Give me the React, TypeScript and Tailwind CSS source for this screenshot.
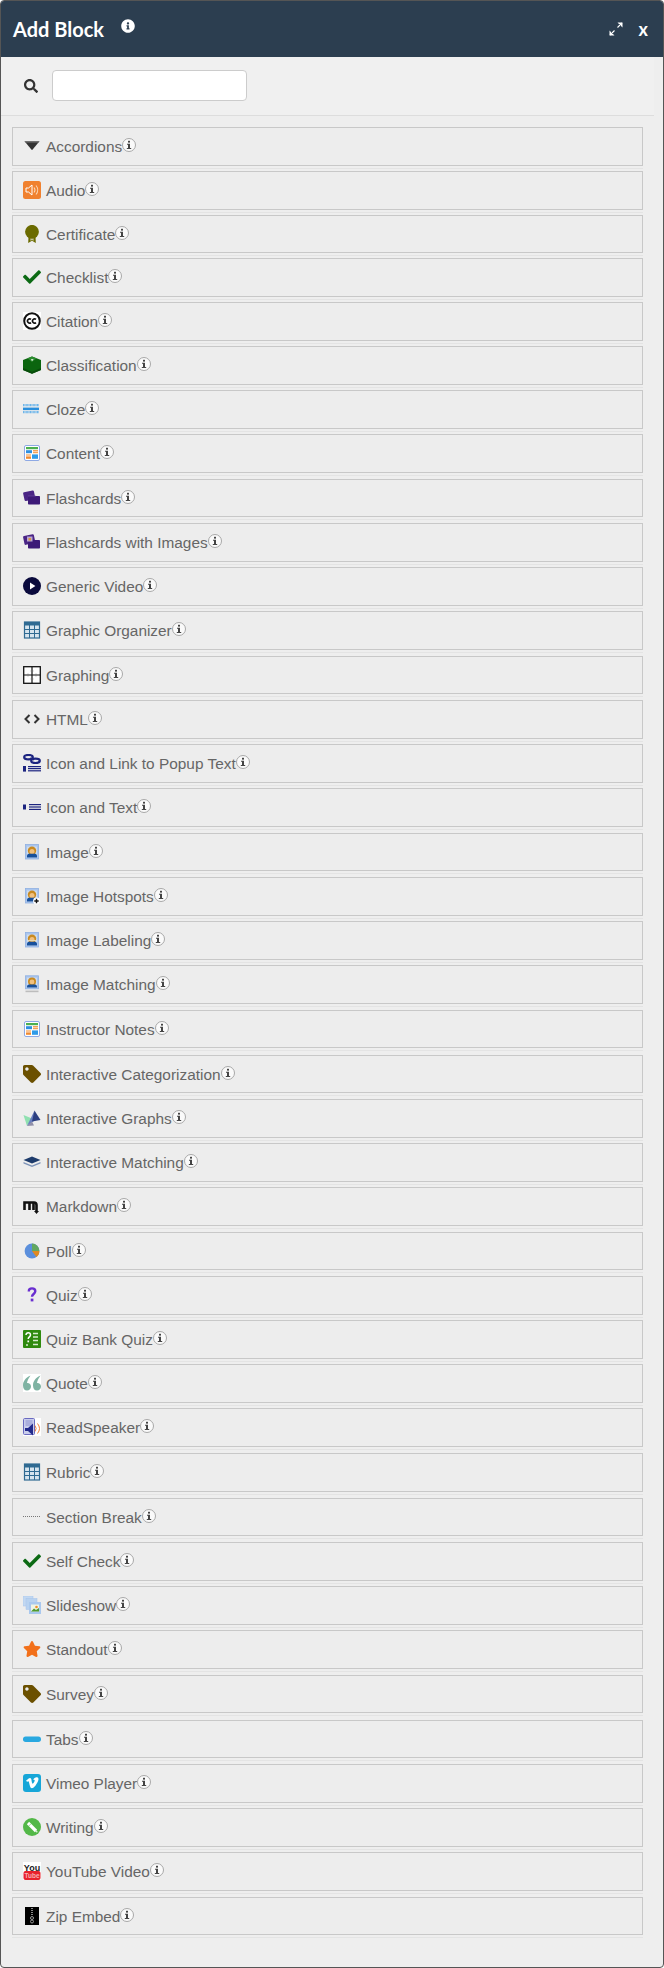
import React from "react";
import { FaCheck, FaInfoCircle, FaSearch, FaStar, FaTag } from "react-icons/fa";

const Svg = ({ children }: { children: React.ReactNode }) => (
  <svg viewBox="0 0 18 18" className="h-[18px] w-[18px] shrink-0">
    {children}
  </svg>
);

const ContentIcon = () => (
  <Svg>
    <rect x="1.5" y="1.5" width="15" height="15" rx="1.5" fill="#fff" stroke="#8ea9e4" />
    <rect x="3" y="3" width="12" height="2.2" fill="#4caf50" />
    <rect x="3" y="6.2" width="6" height="3" fill="#2f8fe0" />
    <rect x="10" y="6.2" width="5" height="1.2" fill="#f08a30" />
    <rect x="10" y="8.2" width="5" height="1" fill="#f08a30" />
    <rect x="3" y="10.4" width="5" height="1.2" fill="#f5a050" />
    <rect x="3" y="12.4" width="5" height="2.4" fill="#f08a30" />
    <rect x="9" y="10.4" width="6" height="4.4" fill="#2f9be8" />
  </Svg>
);

const Person = () => (
  <>
    <rect x="2.5" y="1.5" width="13" height="14.5" fill="#a9c5ee" stroke="#8fb0e2" strokeWidth="0.8" />
    <rect x="4" y="3.5" width="10" height="11" fill="#cfdcec" />
    <circle cx="9" cy="7.8" r="4.2" fill="#c98a20" />
    <circle cx="9" cy="8.4" r="2.5" fill="#f0c080" />
    <path d="M4 14.500v-1.800c0-1.400 1.400-2 2.600-2h4.800c1.200 0 2.600.6 2.600 2v1.800z" fill="#17509c" />
  </>
);

const ImageIcon = () => (
  <Svg>
    <Person />
  </Svg>
);

const HotspotIcon = () => (
  <Svg>
    <Person />
    <circle cx="13.500" cy="14" r="3.400" fill="#fff" />
    <path d="M13.500 11.800v4.400M11.300 14h4.400" stroke="#111" strokeWidth="1.400" />
  </Svg>
);

const LabelingIcon = () => (
  <Svg>
    <Person />
    <rect x="5" y="9" width="8" height="1" fill="#e8d8b0" />
  </Svg>
);

const MatchingIcon = () => (
  <Svg>
    <rect x="2.500" y="0.800" width="13" height="13" fill="#a9c5ee" stroke="#8fb0e2" strokeWidth="0.800" />
    <rect x="4" y="2.600" width="10" height="9.800" fill="#cfdcec" />
    <circle cx="9" cy="6.400" r="4" fill="#c98a20" />
    <circle cx="9" cy="7" r="2.400" fill="#f0c080" />
    <path d="M4 12.400v-1c0-1.400 1.400-2 2.600-2h4.800c1.200 0 2.600.6 2.600 2v1z" fill="#17509c" />
    <rect x="2.500" y="15.600" width="13" height="1.600" fill="#bdbdbd" />
  </Svg>
);

const GridIcon = () => (
  <Svg>
    <rect x="1.500" y="1" width="15" height="16" fill="#d6e4ee" stroke="#2f6a92" strokeWidth="1.200" />
    <rect x="1" y="1" width="16" height="3.500" fill="#2f6a92" />
    <path d="M6.500 4v13M11.500 4v13M2 8.500h14M2 12.500h14" stroke="#2f6a92" strokeWidth="1" />
  </Svg>
);

const CheckIcon = () => (
  <span className="flex h-[18px] w-[18px] shrink-0 items-center justify-center text-[#0c6a14]">
    <FaCheck size={18} />
  </span>
);

const TagIcon = () => (
  <span className="flex h-[18px] w-[18px] shrink-0 items-center justify-center text-[#6b5000]">
    <FaTag size={18} />
  </span>
);

const icons: Record<string, React.ReactNode> = {
  accordion: (
    <Svg>
      <path d="M1.500 4.200h15L9 13.200z" fill="#333" />
      <path d="M1.500 4.200h15l-1 1.200h-13z" fill="#777" />
    </Svg>
  ),
  audio: (
    <Svg>
      <rect width="18" height="18" rx="2.500" fill="#f0812f" />
      <path d="M3 7h2.500L9 4v10l-3.500-3H3z" fill="none" stroke="#fff" strokeWidth="1" />
      <path d="M11 6.500a4 4 0 0 1 0 5M13 4.500a7 7 0 0 1 0 9" fill="none" stroke="#fbd6b5" strokeWidth="1.100" />
    </Svg>
  ),
  certificate: (
    <Svg>
      <path d="M5.500 11l-.3 7 3.800-2.200 3.800 2.200-.3-7z" fill="#6b6b00" />
      <path d="M7.500 13l-.2 2.800L9 15l1.700.8-.2-2.800z" fill="#c4c49a" />
      <circle cx="9" cy="6.800" r="6.900" fill="#6b6b00" />
    </Svg>
  ),
  check: <CheckIcon />,
  citation: (
    <Svg>
      <rect width="18" height="18" fill="#fff" />
      <circle cx="9" cy="9" r="7.800" fill="#fff" stroke="#111" strokeWidth="2" />
      <path d="M8 7.400a2.100 2.100 0 1 0 0 3.200M13 7.400a2.100 2.100 0 1 0 0 3.200" fill="none" stroke="#111" strokeWidth="1.600" />
    </Svg>
  ),
  classification: (
    <Svg>
      <path d="M9 0.500l9 3.500v10l-9 3.700L0 14V4z" fill="#0b650f" />
      <path d="M9 0.500l4.500 1.800L9 6 4.500 2.300z" fill="#2c8c30" />
      <path d="M8 3h2.500l-.6 1.800H8.600z" fill="#cfe5cf" />
      <path d="M0 12l9 3.700 9-3.700v2l-9 3.700L0 14z" fill="#084c0b" />
    </Svg>
  ),
  cloze: (
    <Svg>
      <path d="M0 5.200h16" stroke="#6fb6ea" strokeWidth="2.200" strokeDasharray="1 .4" />
      <rect x="0" y="7.600" width="16" height="2.500" fill="#2a8fdc" />
      <path d="M0 12.200h16" stroke="#6fb6ea" strokeWidth="2.200" strokeDasharray="1 .4" />
    </Svg>
  ),
  content: <ContentIcon />,
  flashcards: (
    <Svg>
      <rect x="0.800" y="2.200" width="11" height="9" rx="1.200" fill="#4a2585" transform="rotate(-12 6.500 7)" />
      <rect x="5" y="7" width="12" height="8.500" rx="0.800" fill="#3d1a78" />
      <path d="M5 7h8" stroke="#7a5aa8" strokeWidth="0.500" />
    </Svg>
  ),
  flashimages: (
    <Svg>
      <rect x="0.800" y="2" width="11" height="9" rx="1.200" fill="#4a2585" transform="rotate(-12 6.500 7)" />
      <rect x="5" y="7" width="12" height="8.500" rx="0.800" fill="#3d1a78" />
      <rect x="4" y="3.500" width="5.500" height="5" fill="#b9a5d2" />
      <rect x="5.500" y="5" width="2.500" height="2.500" fill="#d89a3c" />
    </Svg>
  ),
  video: (
    <Svg>
      <circle cx="9" cy="9" r="9" fill="#0a0a3c" />
      <path d="M7 5.600L12.400 9 7 12.400z" fill="#fff" />
    </Svg>
  ),
  grid: <GridIcon />,
  graphing: (
    <Svg>
      <rect x="0.700" y="0.700" width="16.600" height="16.600" fill="#fff" stroke="#111" strokeWidth="1.300" />
      <path d="M9 1v16M1 9h16" stroke="#111" strokeWidth="1.200" />
      <path d="M5 7.500v3M13 7.500v3M7.500 5h3M7.500 13h3" stroke="#777" strokeWidth="0.600" />
    </Svg>
  ),
  html: (
    <Svg>
      <path d="M6.500 5L2.500 9l4 4M11.500 5l4 4-4 4" fill="none" stroke="#333" strokeWidth="2" />
    </Svg>
  ),
  popup: (
    <Svg>
      <ellipse cx="5.500" cy="3.200" rx="4.300" ry="2.200" fill="none" stroke="#1c2480" strokeWidth="2.200" />
      <ellipse cx="12.500" cy="6.800" rx="4.300" ry="2.200" fill="none" stroke="#1c2480" strokeWidth="2.200" />
      <path d="M7 4.500l4 1" stroke="#1c2480" strokeWidth="2.200" />
      <rect x="0" y="12" width="3" height="5.600" fill="#1c2480" />
      <rect x="5" y="12" width="13" height="1.200" fill="#1c2480" />
      <rect x="5" y="14" width="13" height="1.200" fill="#1c2480" />
      <rect x="5" y="16.200" width="13" height="1.200" fill="#1c2480" />
    </Svg>
  ),
  icontext: (
    <Svg>
      <rect x="0" y="6.500" width="3" height="5" fill="#1c2480" />
      <rect x="6" y="6" width="12" height="1.200" fill="#1c2480" />
      <rect x="6" y="8.400" width="12" height="1.200" fill="#1c2480" />
      <rect x="6" y="10.800" width="12" height="1.200" fill="#1c2480" />
    </Svg>
  ),
  image: <ImageIcon />,
  hotspot: <HotspotIcon />,
  labeling: <LabelingIcon />,
  matching: <MatchingIcon />,
  tag: <TagIcon />,
  graphs: (
    <Svg>
      <path d="M0.500 6l8.500 3.500L4 17z" fill="#8fe0b0" />
      <path d="M11.500 1.500L4 17l7-5z" fill="#6a7fc0" />
      <path d="M11.500 1.500L17.500 11 9 12.500z" fill="#2b3f80" />
      <path d="M4 17l5-4.500 2 4z" fill="#8f8fa8" />
    </Svg>
  ),
  layers: (
    <Svg>
      <path d="M9 3.500l8.500 3.500L9 10.500.5 7z" fill="#1d3b6b" />
      <path d="M.5 9L9 12.500 17.500 9v1.500L9 14 .5 10.500z" fill="#7d93b8" />
    </Svg>
  ),
  markdown: (
    <Svg>
      <path d="M1.500 13V5.500h9.500a2.500 2.500 0 0 1 2.500 2.500v7" fill="none" stroke="#111" strokeWidth="2.600" />
      <path d="M6.500 13V6M10.500 13V6" stroke="#111" strokeWidth="2.600" />
      <path d="M11 14h5l-2.500 3z" fill="#111" />
    </Svg>
  ),
  poll: (
    <Svg>
      <circle cx="9" cy="9" r="7.400" fill="#5b8fdc" />
      <path d="M9 9V1.600A7.400 7.400 0 0 1 16.400 9z" fill="#63a860" />
      <path d="M9 9h7.400a7.400 7.400 0 0 1-3 6z" fill="#e08a20" />
    </Svg>
  ),
  quiz: (
    <Svg>
      <path d="M5.800 5.400C5.800 3.400 7.300 2.400 9 2.400s3.300 1 3.300 2.900c0 2.600-3.300 2.800-3.300 5.400" fill="none" stroke="#6a2fd0" strokeWidth="2.400" />
      <rect x="7.700" y="12.600" width="2.700" height="2.800" fill="#6a2fd0" />
    </Svg>
  ),
  bank: (
    <Svg>
      <rect width="18" height="18" rx="1" fill="#2f8a0e" />
      <path d="M3 5c0-1.500 1-2.200 2.200-2.200S7.500 3.600 7.500 5c0 1.800-2.300 2-2.300 4" fill="none" stroke="#fff" strokeWidth="1.500" />
      <rect x="4.400" y="10.500" width="1.700" height="1.800" fill="#fff" />
      <path d="M10 3.500h5M10 7h5M10 10.500h5M3 15h2M10 14.500h5" stroke="#d8ecd0" strokeWidth="1.600" />
    </Svg>
  ),
  quote: (
    <Svg>
      <rect width="18" height="18" fill="#fff" />
      <path d="M7.500 1.500C3 3.500 0 7 0 11.500 0 14.500 1.500 16.500 4 16.500s4-1.800 4-4c0-2.500-2-3.800-4-3.500.2-2.500 1.800-5 3.500-7.500z" fill="#7fb3a3" />
      <path d="M17.500 1.500C13 3.500 10 7 10 11.500c0 3 1.500 5 4 5s4-1.800 4-4c0-2.500-2-3.800-4-3.500.2-2.500 1.800-5 3.500-7.500z" fill="#7fb3a3" />
    </Svg>
  ),
  readspeaker: (
    <Svg>
      <rect width="18" height="18" fill="#fff" />
      <rect x="0.500" y="0.500" width="11" height="16" rx="1" fill="#c9cdec" stroke="#6a6ac0" />
      <path d="M2.500 3h7M2.500 5h7M2.500 7h7" stroke="#7d80c8" strokeWidth="0.800" />
      <path d="M2 10h3l5-4.500v12L5 13H2z" fill="#232a8c" />
      <path d="M12 7.500a5 5 0 0 1 0 6M14.500 5.500a8 8 0 0 1 0 10" fill="none" stroke="#f0813a" strokeWidth="1" />
    </Svg>
  ),
  break: (
    <Svg>
      <path d="M0 8.500h18" stroke="#777" strokeWidth="1" strokeDasharray="1 1" />
    </Svg>
  ),
  slideshow: (
    <Svg>
      <rect x="0" y="0" width="10" height="10" fill="#c2d8f2" stroke="#a6c4ea" strokeWidth="0.500" />
      <rect x="3" y="2.500" width="11" height="11" fill="#b8d2f0" stroke="#a6c4ea" strokeWidth="0.500" />
      <rect x="6" y="6" width="12" height="12" fill="#a9c8ee" />
      <rect x="8" y="8.500" width="8" height="7" fill="#eef4e4" />
      <path d="M8 15.500l3-3 2 1.500 3-2v3.500z" fill="#4f9a30" />
      <circle cx="13.500" cy="11" r="1.300" fill="#f0902a" />
    </Svg>
  ),
  star: (
    <span className="flex h-[18px] w-[18px] shrink-0 items-center justify-center text-[#f2701a]">
      <FaStar size={18} />
    </span>
  ),
  tabs: (
    <Svg>
      <rect x="0" y="6.500" width="18" height="5.500" rx="2.700" fill="#29a8e0" />
    </Svg>
  ),
  vimeo: (
    <Svg>
      <rect width="18" height="18" rx="3" fill="#17a6d8" />
      <path d="M3 6.800C4.800 5.300 6 4 7 4c1.700 0 1.500 3.200 2.100 5 .4 1 .7.8 1.200.2.800-1 1.400-2 1.400-2.700 0-.8-.8-.8-1.500-.4C10.800 3.800 12.500 3 14 3.200c1.500.2 1.700 1.600 1.300 3-.8 3-4.300 8-6.400 8-1.800 0-2.300-4-3-6.300-.3-1-.6-1-1.800-.1z" fill="#fff" />
    </Svg>
  ),
  writing: (
    <Svg>
      <circle cx="9" cy="9" r="9" fill="#53b848" />
      <path d="M5 5l8 8" stroke="#fff" strokeWidth="3.200" />
      <path d="M5.800 8l2.300-2.300" stroke="#53b848" strokeWidth="0.500" />
      <path d="M12.500 12.500l1.800 1.800" stroke="#d8f0d4" strokeWidth="1.400" />
    </Svg>
  ),
  youtube: (
    <Svg>
      <rect width="18" height="18" fill="#fff" />
      <text x="9" y="8.500" textAnchor="middle" fontSize="9" fontWeight="700" fontFamily="Liberation Sans, sans-serif" fill="#222">You</text>
      <rect x="0.500" y="9" width="17" height="9" rx="2" fill="#e8222c" />
      <text x="9" y="15.500" textAnchor="middle" fontSize="6.500" fontWeight="700" fontFamily="Liberation Sans, sans-serif" fill="#f6b0b0">Tube</text>
    </Svg>
  ),
  zip: (
    <Svg>
      <rect x="2" y="0" width="14" height="18" fill="#000" />
      <path d="M9 1v7" stroke="#888" strokeWidth="2" strokeDasharray="1 1" />
      <circle cx="9" cy="11" r="1.500" fill="none" stroke="#999" strokeWidth="1" />
      <circle cx="9" cy="14.500" r="1.500" fill="none" stroke="#999" strokeWidth="1" />
    </Svg>
  ),
};

// label, icon, row height, gap below (the rows in the panel land on uneven pixels)
const blocks: [string, string, number, number][] = [
  ["Accordions", "accordion", 39, 5],
  ["Audio", "audio", 39, 5],
  ["Certificate", "certificate", 38, 5],
  ["Checklist", "check", 39, 5],
  ["Citation", "citation", 39, 5],
  ["Classification", "classification", 39, 5],
  ["Cloze", "cloze", 39, 5],
  ["Content", "content", 39, 6],
  ["Flashcards", "flashcards", 38, 6],
  ["Flashcards with Images", "flashimages", 39, 5],
  ["Generic Video", "video", 39, 5],
  ["Graphic Organizer", "grid", 39, 6],
  ["Graphing", "graphing", 38, 6],
  ["HTML", "html", 39, 5],
  ["Icon and Link to Popup Text", "popup", 39, 5],
  ["Icon and Text", "icontext", 39, 6],
  ["Image", "image", 38, 6],
  ["Image Hotspots", "hotspot", 39, 5],
  ["Image Labeling", "labeling", 39, 5],
  ["Image Matching", "matching", 39, 6],
  ["Instructor Notes", "content", 38, 7],
  ["Interactive Categorization", "tag", 38, 6],
  ["Interactive Graphs", "graphs", 39, 5],
  ["Interactive Matching", "layers", 39, 5],
  ["Markdown", "markdown", 39, 6],
  ["Poll", "poll", 38, 6],
  ["Quiz", "quiz", 39, 5],
  ["Quiz Bank Quiz", "bank", 39, 5],
  ["Quote", "quote", 39, 5],
  ["ReadSpeaker", "readspeaker", 39, 6],
  ["Rubric", "grid", 39, 6],
  ["Section Break", "break", 38, 6],
  ["Self Check", "check", 39, 5],
  ["Slideshow", "slideshow", 39, 5],
  ["Standout", "star", 39, 6],
  ["Survey", "tag", 38, 7],
  ["Tabs", "tabs", 38, 6],
  ["Vimeo Player", "vimeo", 39, 5],
  ["Writing", "writing", 39, 5],
  ["YouTube Video", "youtube", 39, 6],
  ["Zip Embed", "zip", 38, 5],
];

const InfoMark = () => (
  <svg viewBox="0 0 14 14" className="mb-[3px] h-[14px] w-[14px] shrink-0">
    <circle cx="7" cy="7" r="6.500" fill="#fafafa" stroke="#a8a8a8" />
    <rect x="6" y="2.800" width="2" height="1.800" fill="#444" />
    <path d="M5 5.800h3v4.200h1.200v1H4.800v-1H6V6.800H5z" fill="#444" />
  </svg>
);

const ExpandIcon = () => (
  <svg viewBox="0 0 14 14" className="h-[14px] w-[14px]">
    <path d="M1 13l4.500-4.500M8.500 5.500L13 1" stroke="#fff" strokeWidth="1.100" fill="none" />
    <path d="M0.500 8.500v5h5l-1.500-1.500H2V10z" fill="#fff" />
    <path d="M13.500 5.500v-5h-5L10 2h2v2z" fill="#fff" />
  </svg>
);

export default function App() {
  return (
    <div className="flex h-[1968px] w-[664px] flex-col overflow-hidden rounded-[4px] border border-[#555] bg-[#eeeeee] font-['Liberation_Sans',sans-serif]">
      <header className="flex h-[56px] shrink-0 items-center bg-[#2c3e50] pl-[12px] pr-[15px] text-white">
        <h1 className="mb-[1px] font-['Lato',sans-serif] text-[20px] font-bold leading-none">Add Block</h1>
        <FaInfoCircle size={14} className="mb-[6px] ml-[17px]" />
        <div className="ml-auto flex items-center gap-[16px]">
          <ExpandIcon />
          <span className="mb-[1px] font-['Lato',sans-serif] text-[18px] font-bold leading-none">x</span>
        </div>
      </header>

      <div className="mr-[9px] flex h-[59px] shrink-0 items-center gap-[14px] border-b border-[#dddddd] bg-[#f0f0f0] pb-[1px] pl-[23px]">
        <FaSearch size={14} className="text-[#333]" />
        <input type="text" className="h-[31px] w-[195px] rounded-[4px] border border-[#cccccc] bg-white" />
      </div>

      <ul className="pl-[11px] pr-[20px] pt-[11px]">
        {blocks.map(([label, icon, height, gap], i) => (
          <li
            key={label + i}
            className={`border-b border-[#e4e4e4] pb-[2px] ${gap === 5 ? "mb-[2px]" : gap === 6 ? "mb-[3px]" : "mb-[4px]"}`}
          >
            <div
              className={`flex items-center border border-[#c8c8c8] bg-[#ededed] pl-[10px] text-[15.4px] text-[#666] ${height === 39 ? "h-[39px]" : "h-[38px] pt-[1px]"}`}
            >
              <span className="mb-[1px] shrink-0">{icons[icon]}</span>
              <span className="ml-[5px] whitespace-nowrap">{label}</span>
              <InfoMark />
            </div>
          </li>
        ))}
      </ul>
    </div>
  );
}
